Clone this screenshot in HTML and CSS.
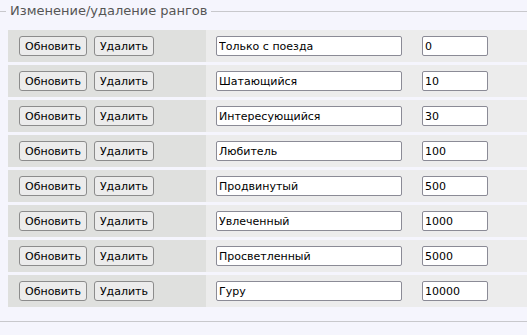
FILE: index.html
```html
<!DOCTYPE html>
<html lang="ru">
  <head>
    <meta charset="UTF-8" />
    <title>Ранги</title>
    <link rel="stylesheet" href="styles.css">
  </head>
  <body>
    <fieldset class="ranks">
      <legend>Изменение/удаление рангов</legend>
      <table class="ranks__table">
        <tr>
          <td class="ranks__actions"><button type="button">Обновить</button><button type="button">Удалить</button></td>
          <td class="ranks__fields"><input class="ranks__name" type="text" value="Только с поезда"><input class="ranks__points" type="text" value="0"></td>
        </tr>
        <tr>
          <td class="ranks__actions"><button type="button">Обновить</button><button type="button">Удалить</button></td>
          <td class="ranks__fields"><input class="ranks__name" type="text" value="Шатающийся"><input class="ranks__points" type="text" value="10"></td>
        </tr>
        <tr>
          <td class="ranks__actions"><button type="button">Обновить</button><button type="button">Удалить</button></td>
          <td class="ranks__fields"><input class="ranks__name" type="text" value="Интересующийся"><input class="ranks__points" type="text" value="30"></td>
        </tr>
        <tr>
          <td class="ranks__actions"><button type="button">Обновить</button><button type="button">Удалить</button></td>
          <td class="ranks__fields"><input class="ranks__name" type="text" value="Любитель"><input class="ranks__points" type="text" value="100"></td>
        </tr>
        <tr>
          <td class="ranks__actions"><button type="button">Обновить</button><button type="button">Удалить</button></td>
          <td class="ranks__fields"><input class="ranks__name" type="text" value="Продвинутый"><input class="ranks__points" type="text" value="500"></td>
        </tr>
        <tr>
          <td class="ranks__actions"><button type="button">Обновить</button><button type="button">Удалить</button></td>
          <td class="ranks__fields"><input class="ranks__name" type="text" value="Увлеченный"><input class="ranks__points" type="text" value="1000"></td>
        </tr>
        <tr>
          <td class="ranks__actions"><button type="button">Обновить</button><button type="button">Удалить</button></td>
          <td class="ranks__fields"><input class="ranks__name" type="text" value="Просветленный"><input class="ranks__points" type="text" value="5000"></td>
        </tr>
        <tr>
          <td class="ranks__actions"><button type="button">Обновить</button><button type="button">Удалить</button></td>
          <td class="ranks__fields"><input class="ranks__name" type="text" value="Гуру"><input class="ranks__points" type="text" value="10000"></td>
        </tr>
      </table>
    </fieldset>
  </body>
</html>
```
FILE: styles.css
```css
* {
  box-sizing: border-box;
}
body {
  margin: 0;
  background: #f5f5fd;
  font: 11px/1.2 "DejaVu Sans", sans-serif;
  color: #000;
  overflow: hidden;
}
.ranks {
  margin: 0;
  min-width: 0;
  border: 0;
  border-top: 1px solid #c8c8cc;
  border-bottom: 1px solid #c8c8cc;
  padding: 5px 0 11px 8px;
}
.ranks legend {
  margin-left: -2px;
  padding: 0 4px;
  font-size: 13px;
  line-height: 22px;
  color: #555;
}
.ranks__table {
  width: 100%;
  border-collapse: separate;
  border-spacing: 0 3px;
}
.ranks__table td {
  height: 32px;
  padding: 0;
  vertical-align: middle;
}
.ranks__actions {
  width: 198px;
  background: #dfe0de;
  padding-left: 11px !important;
}
.ranks__fields {
  background: #ececec;
  padding-left: 10px !important;
}
button {
  font: 11px "DejaVu Sans", sans-serif;
  color: #000;
  height: 20px;
  padding: 0 5px;
  margin: 0 7px 0 0;
  background: #ececec;
  border: 1px solid #8c8c8c;
  border-radius: 3px;
  vertical-align: middle;
}
input {
  font: 11px "DejaVu Sans", sans-serif;
  color: #000;
  height: 20px;
  padding: 0 2px;
  background: #fff;
  border: 1px solid #8b8b96;
  border-radius: 2px;
  vertical-align: middle;
}
.ranks__name {
  width: 186px;
  margin-right: 20px;
}
.ranks__points {
  width: 66px;
}
```
